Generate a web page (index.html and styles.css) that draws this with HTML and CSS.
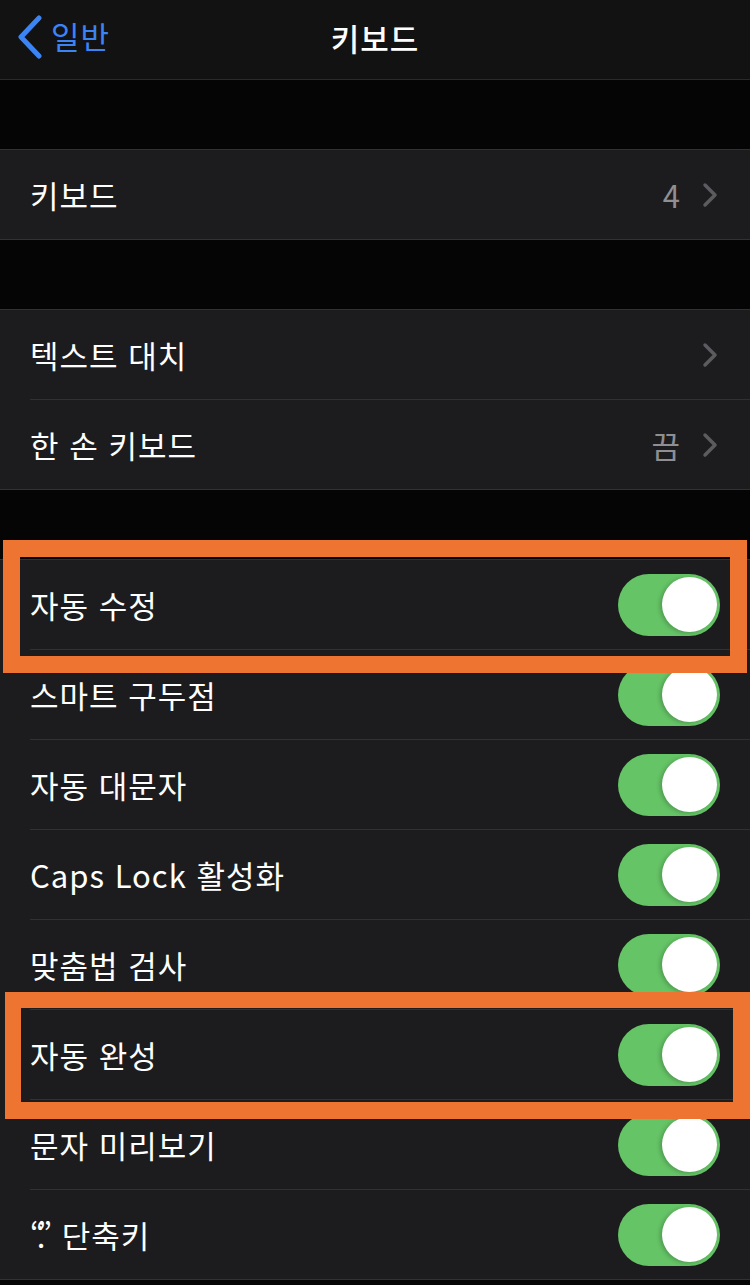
FILE: index.html
```html
<!DOCTYPE html>
<html lang="ko">
<head>
<meta charset="UTF-8" />
<meta name="viewport" content="width=device-width,initial-scale=1.0" />
<title>키보드</title>
<link rel="stylesheet" href="styles.css">
</head>
<body>
  <header class="nav">
    <a class="back">
      <svg class="back-icon" viewBox="0 0 26 44" width="26" height="44"><polyline points="22,3 4,22 22,41" /></svg>
      <span>일반</span>
    </a>
    <h1 class="title">키보드</h1>
    <div></div>
  </header>

  <div class="gap"></div>

  <section class="group">
    <div class="cell">
      <div class="row">
        <span class="label">키보드</span>
        <span class="value">4</span>
        <svg class="chev" viewBox="0 0 16 26" width="16" height="26"><polyline points="3,3 13,13 3,23" /></svg>
      </div>
    </div>
  </section>

  <div class="gap"></div>

  <section class="group">
    <div class="cell">
      <div class="row">
        <span class="label">텍스트 대치</span>
        <svg class="chev" viewBox="0 0 16 26" width="16" height="26"><polyline points="3,3 13,13 3,23" /></svg>
      </div>
    </div>
    <div class="cell">
      <div class="row">
        <span class="label">한 손 키보드</span>
        <span class="value">끔</span>
        <svg class="chev" viewBox="0 0 16 26" width="16" height="26"><polyline points="3,3 13,13 3,23" /></svg>
      </div>
    </div>
  </section>

  <div class="gap"></div>

  <section class="group">
    <div class="cell">
      <div class="row"><span class="label">자동 수정</span><span class="toggle on"><span class="knob"></span></span></div>
      <div class="mark mark-1"></div>
    </div>
    <div class="cell">
      <div class="row"><span class="label">스마트 구두점</span><span class="toggle on"><span class="knob"></span></span></div>
    </div>
    <div class="cell">
      <div class="row"><span class="label">자동 대문자</span><span class="toggle on"><span class="knob"></span></span></div>
    </div>
    <div class="cell">
      <div class="row"><span class="label">Caps Lock 활성화</span><span class="toggle on"><span class="knob"></span></span></div>
    </div>
    <div class="cell">
      <div class="row"><span class="label">맞춤법 검사</span><span class="toggle on"><span class="knob"></span></span></div>
    </div>
    <div class="cell">
      <div class="row"><span class="label">자동 완성</span><span class="toggle on"><span class="knob"></span></span></div>
      <div class="mark mark-2"></div>
    </div>
    <div class="cell">
      <div class="row"><span class="label">문자 미리보기</span><span class="toggle on"><span class="knob"></span></span></div>
    </div>
    <div class="cell">
      <div class="row"><span class="label"><span class="quote">“.”</span> 단축키</span><span class="toggle on"><span class="knob"></span></span></div>
    </div>
  </section>
</body>
</html>
```

FILE: styles.css
```css
body { margin: 0; background: #050505; color: #fff; font-family: "Noto Sans CJK KR", "Noto Sans", sans-serif; }

/* navigation bar */
.nav { display: grid; grid-template-columns: 1fr auto 1fr; align-items: center; height: 80px; padding: 0 17px 5px; box-sizing: border-box; background: #121212; border-bottom: 1px solid #2a2a2c; }
.back { display: flex; align-items: center; gap: 8px; color: #3b84f6; font-size: 31px; line-height: 1; letter-spacing: 1px; }
.back-icon { fill: none; stroke: #3b84f6; stroke-width: 5; stroke-linecap: round; stroke-linejoin: round; }
.back span { margin-top: -4px; }
.title { margin: 0; font-size: 31px; font-weight: 500; line-height: 1; letter-spacing: 1px; }

.gap { height: 69px; }

/* grouped list */
.group { background: #1c1c1e; border-top: 1px solid #323235; border-bottom: 1px solid #323235; }
.cell { position: relative; }
.row { display: flex; align-items: center; height: 89px; margin-left: 30px; padding-right: 30px; }
.cell + .cell .row { border-top: 1px solid #313134; }
.label { flex: 1; font-size: 31px; line-height: 1; letter-spacing: 1px; color: #fff; }
.value { font-size: 31px; line-height: 1; color: #8e8e93; margin-right: 22px; }
.chev { fill: none; stroke: #5c5c60; stroke-width: 3.5; stroke-linecap: round; stroke-linejoin: round; margin-right: 2px; }
.quote { letter-spacing: -8px; margin-right: 8px; }

/* switch */
.toggle { position: relative; width: 102px; height: 62px; border-radius: 31px; background: #e9e9ea; }
.toggle.on { background: #65c466; }
.knob { position: absolute; top: 3.5px; right: 3.5px; width: 55px; height: 55px; border-radius: 50%; background: #fff; box-shadow: -2px 1px 4px rgba(0,0,0,0.22); }

/* orange highlight boxes drawn over the list */
.mark { position: absolute; z-index: 1; border: 17px solid #ee7431; box-sizing: border-box; pointer-events: none; }
.mark-1 { top: -20px; left: 3px; width: 744px; height: 133px; }
.mark-2 { top: -17px; left: 5px; right: 0; height: 127px; border-width: 16px 17px 17px 16px; }
```
